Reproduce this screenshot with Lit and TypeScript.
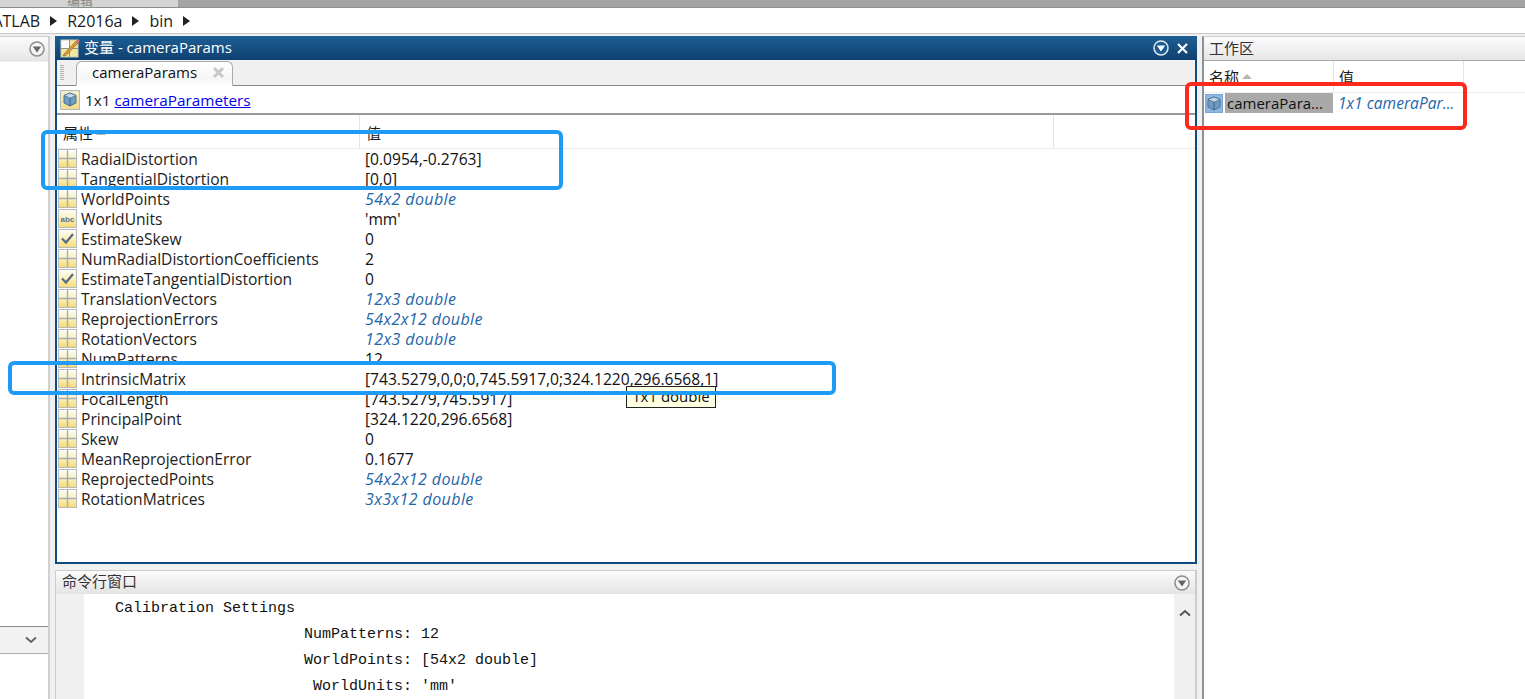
import { LitElement, html, css, svg } from "lit";
import { customElement } from "lit/decorators.js";

type Row = [string, "grid" | "abc" | "check", string, boolean?];
const ROWS: Row[] = [
  ["RadialDistortion", "grid", "[0.0954,-0.2763]"],
  ["TangentialDistortion", "grid", "[0,0]"],
  ["WorldPoints", "grid", "54x2 double", true],
  ["WorldUnits", "abc", "'mm'"],
  ["EstimateSkew", "check", "0"],
  ["NumRadialDistortionCoefficients", "grid", "2"],
  ["EstimateTangentialDistortion", "check", "0"],
  ["TranslationVectors", "grid", "12x3 double", true],
  ["ReprojectionErrors", "grid", "54x2x12 double", true],
  ["RotationVectors", "grid", "12x3 double", true],
  ["NumPatterns", "grid", "12"],
  ["IntrinsicMatrix", "grid", "[743.5279,0,0;0,745.5917,0;324.1220,296.6568,1]"],
  ["FocalLength", "grid", "[743.5279,745.5917]"],
  ["PrincipalPoint", "grid", "[324.1220,296.6568]"],
  ["Skew", "grid", "0"],
  ["MeanReprojectionError", "grid", "0.1677"],
  ["ReprojectedPoints", "grid", "54x2x12 double", true],
  ["RotationMatrices", "grid", "3x3x12 double", true],
];

const defs = svg`<defs>
  <linearGradient id="cell" x1="0" y1="0" x2="0" y2="1">
    <stop offset="0" stop-color="#fdfdf8"/><stop offset="0.5" stop-color="#fbf0c0"/><stop offset="1" stop-color="#f7da70"/>
  </linearGradient>
</defs>`;

const gridIcon = html`<svg class="ic" width="19" height="19" viewBox="0 0 19 19">
  <rect x="0.5" y="0.5" width="18" height="18" fill="url(#cell)" stroke="#b4babd"/>
  <path d="M9.5 1V18M1 9.5H18" stroke="#a3afb8" stroke-width="1.4"/>
  <path d="M1.5 1.5H8.5M10.5 1.5H17.5" stroke="#fff"/>
</svg>`;
const abcIcon = html`<svg class="ic" width="19" height="19" viewBox="0 0 19 19">
  <rect x="0.5" y="0.5" width="18" height="18" fill="url(#cell)" stroke="#b4babd"/>
  <text x="9.5" y="13" text-anchor="middle" class="abc">abc</text>
</svg>`;
const checkIcon = html`<svg class="ic" width="19" height="19" viewBox="0 0 19 19">
  <rect x="0.5" y="0.5" width="18" height="18" fill="url(#cell)" stroke="#b4babd"/>
  <path d="M4 9.5L8 13.5L15 5" fill="none" stroke="#566d80" stroke-width="2.2"/>
</svg>`;
const cube = html`<svg width="14" height="15" viewBox="0 0 14 15">
  <path d="M7 1L13 3.5V11L7 14L1 11V3.5Z" fill="#6f9cc4" stroke="#4c6f8f"/>
  <path d="M1 3.5L7 6.2L13 3.5L7 1Z" fill="#c3d9ea" stroke="#4c6f8f" stroke-width=".8"/>
  <path d="M7 6.2V14" stroke="#3f6385"/>
</svg>`;
const circleBtn = (light: boolean) => html`<svg width="16" height="16" viewBox="0 0 16 16">
  <circle cx="8" cy="8" r="7" fill="${light ? "#1d5a8f" : "#f4f4f4"}" stroke="${light ? "#dfe8f0" : "#8d8d8d"}" stroke-width="1.5"/>
  <path d="M3.8 5.6H12.2L8 11.4Z" fill="${light ? "#fff" : "#666"}"/>
</svg>`;
const tri = html`<svg width="7" height="10" viewBox="0 0 7 10"><path d="M0 0L7 5L0 10Z" fill="#222"/></svg>`;
const sortTri = html`<svg width="10" height="5" viewBox="0 0 10 5"><path d="M0 5L5 0L10 5Z" fill="#b9b8a8"/></svg>`;

@customElement("app-root")
export class AppRoot extends LitElement {
  static styles = css`
    :host {
      display: block;
      position: relative;
      width: 1525px;
      height: 699px;
      overflow: hidden;
      background: #fff;
      font-family: "Open Sans", "Noto Sans CJK SC", sans-serif;
      font-size: 15.6px;
      color: #1a1a1a;
    }
    .top { display: flex; height: 7px; border-bottom: 1px solid #8f8f8f; overflow: hidden; }
    .top .a { width: 178px; background: #d4d4d4; color: #888; font-size: 13px; line-height: 0; padding-left: 67px; box-sizing: border-box; }
    .top .b { flex: 1; background: #a4a4a4; }
    .addr {
      height: 25px; display: flex; align-items: center; gap: 10px; box-sizing: border-box;
      border-bottom: 1px solid #c8c8c8; margin-top: 1px; white-space: nowrap; overflow: hidden; font-size: 16px;
    }
    .addr .clip { margin-left: -22px; }
    .main { display: flex; height: 666px; background: #f0f0f0; padding-top: 2px; box-sizing: border-box; }
    .left { width: 50px; flex: none; background: #fff; border-right: 2px solid #d0d0d0; border-top: 1px solid #ccc; display: flex; flex-direction: column; box-sizing: border-box; }
    .left .h { height: 24px; display: flex; justify-content: flex-end; align-items: center; padding-right: 3px; background: linear-gradient(#fbfbfb, #e6e6e6); }
    .left .list { height: 566px; border-top: 1px solid #eee; border-bottom: 1px solid #8a8a8a; box-sizing: border-box; }
    .left .fold { height: 26px; background: #f2f2f2; border-bottom: 1px solid #aaa; display: flex; justify-content: flex-end; align-items: center; padding-right: 11px; }
    .center { width: 1142px; flex: none; margin-left: 5px; display: flex; flex-direction: column; }
    .var { height: 528px; flex: none; border: 2px solid #0f4a80; border-top: 0; border-radius: 3px 3px 0 0; background: #fff; display: flex; flex-direction: column; box-sizing: border-box; }
    .title { height: 24px; flex: none; margin: 0 -2px; padding: 0 9px 0 5px; display: flex; align-items: center; gap: 4px; color: #fff; font-size: 15px; background: linear-gradient(#1e5f95, #0f406f); box-sizing: border-box; }
    .title .t { padding-bottom: 3px; }
    .title .sp { flex: 1; }
    .title .x { margin-left: 4px; }
    .tabs { height: 26px; flex: none; background: #f0f0f0; border-bottom: 1px solid #888; display: flex; align-items: flex-end; padding-left: 3px; box-sizing: border-box; font-size: 15px; }
    .grip { width: 4px; height: 15px; margin-bottom: 5px; background: repeating-linear-gradient(#b5b5b5 0 1px, transparent 1px 2px); }
    .tab { width: 157px; height: 25px; margin-left: 12px; margin-bottom: -1px; box-sizing: border-box; background: linear-gradient(#fff, #f6f6f6 70%, #fff); border: 1px solid #aaa; border-bottom: 1px solid #fff; border-radius: 6px 6px 0 0; display: flex; align-items: center; justify-content: space-between; padding: 0 7px 3px 15px; color: #111; }
    .tool { height: 29px; flex: none; display: flex; align-items: center; gap: 5px; padding-left: 3px; border-bottom: 2px solid #999; box-sizing: border-box; font-size: 15.3px; }
    .tool a { color: #0000ee; text-decoration: underline; }
    .box { width: 20px; height: 20px; display: flex; align-items: center; justify-content: center; background: linear-gradient(#f5efcf, #f3dd8b); border: 1px solid #b5b8b8; box-sizing: border-box; }
    .thead { height: 34px; flex: none; display: grid; grid-template-columns: 303px 694px 1fr; border-bottom: 1px solid #eaeaea; box-sizing: border-box; }
    .thead > div { border-right: 1px solid #e4e4e4; padding: 2px 0 0 6px; display: flex; align-items: center; gap: 3px; align-self: stretch; font-size: 15px; }
    .thead > div:last-child { border-right: 0; }
    .row { height: 20px; display: grid; grid-template-columns: 303px 1fr; align-items: center; white-space: nowrap; line-height: 20px; }
    .name { display: flex; align-items: center; gap: 4px; color: #222; padding-left: 1px; }
    .ic { flex: none; margin-top: -1px; }
    .abc { font: 700 8px "Liberation Sans", sans-serif; fill: #58708a; }
    .val { padding-left: 5px; color: #111; }
    .val.link { color: #1f66a8; font-style: italic; font-size: 16px; letter-spacing: 0.4px; }
    .cmd { flex: 1; margin-top: 6px; border: 1px solid #ccc; border-bottom: 0; border-right-width: 2px; display: flex; flex-direction: column; min-height: 0; background: #fff; }
    .cmd .h { height: 23px; flex: none; display: flex; align-items: center; justify-content: space-between; padding: 0 5px 0 6px; font-size: 15px; color: #333; background: linear-gradient(#fbfbfb, #e4e4e4); box-sizing: border-box; }
    .cmd .h .t { padding-bottom: 4px; }
    .cmd .b { flex: 1; display: flex; min-height: 0; }
    .gutter { width: 28px; flex: none; background: #f0f0f0; }
    pre { flex: 1; margin: 0; padding: 2px 0 0 4px; font: 15px/26px "Liberation Mono", monospace; color: #111; overflow: hidden; }
    .sb { width: 21px; flex: none; background: #f0f0f0; text-align: center; padding-top: 6px; box-sizing: border-box; }
    .right { flex: 1; margin-left: 5px; border-left: 2px solid #8e8e96; border-top: 1px solid #ccc; background: #fff; display: flex; flex-direction: column; box-sizing: border-box; }
    .right .h { height: 24px; flex: none; display: flex; align-items: center; padding: 0 0 3px 5px; font-size: 15px; color: #333; background: linear-gradient(#fbfbfb, #e6e6e6); border-bottom: 1px solid #aaa; box-sizing: border-box; }
    .wh { height: 32px; flex: none; display: grid; grid-template-columns: 130px 130px; border-bottom: 1px solid #eee; box-sizing: border-box; }
    .wh > div { border-right: 1px solid #e4e4e4; padding-left: 5px; display: flex; align-items: center; gap: 3px; font-size: 15px; }
    .wr { height: 20px; display: flex; align-items: center; white-space: nowrap; }
    .wr .sel { width: 108px; height: 20px; margin-left: 2px; background: #a9a9a9; line-height: 20px; padding-left: 2px; box-sizing: border-box; color: #111; overflow: hidden; font-size: 15px; }
    .wr .ci { width: 18px; height: 19px; background: #8eb6e2; border: 1px solid #79a5d5; box-sizing: border-box; display: flex; align-items: center; justify-content: center; margin-left: 1px; }
    .wr .v { margin-left: 5px; color: #1f66a8; font-style: italic; }
    .tip { position: absolute; left: 626px; top: 386px; width: 90px; height: 22px; box-sizing: border-box; background: #ffffe1; border: 1px solid #222; font-size: 15px; line-height: 19px; padding-left: 5px; white-space: nowrap; color: #111; }
    .mark { position: absolute; box-sizing: border-box; border: 4px solid #1e9cf5; border-radius: 6px; pointer-events: none; }
    .m1 { left: 41px; top: 130px; width: 522px; height: 60px; }
    .m2 { left: 8px; top: 361px; width: 828px; height: 34px; }
    .m3 { left: 1185px; top: 82px; width: 282px; height: 48px; border-color: #fb2a1c; }
  `;

  render() {
    const iconOf = { grid: gridIcon, abc: abcIcon, check: checkIcon };
    return html`
      <svg width="0" height="0" style="position:absolute">${defs}</svg>
      <div class="top"><div class="a">编辑</div><div class="b"></div></div>
      <div class="addr">
        <span class="clip">MATLAB</span>${tri}<span>R2016a</span>${tri}<span>bin</span>${tri}
      </div>
      <div class="main">
        <div class="left">
          <div class="h">${circleBtn(false)}</div>
          <div class="list"></div>
          <div class="fold">
            <svg width="12" height="8" viewBox="0 0 12 8"><path d="M1 1.5L6 6L11 1.5" fill="none" stroke="#666" stroke-width="2"/></svg>
          </div>
        </div>
        <div class="center">
          <div class="var">
            <div class="title">
              <svg width="20" height="20" viewBox="0 0 20 20">
                <rect x="1" y="2" width="17" height="17" fill="#f6e79e" stroke="#c9c9b8"/>
                <path d="M1 10.5H18M9.5 2V19" stroke="#8a8f96"/>
                <rect x="1.5" y="2.5" width="7.5" height="7.5" fill="#fafafa"/>
                <path d="M4 16L16 3L18 5L6 17.5L3 18Z" fill="#d99a3a" stroke="#8a5a1d" stroke-width=".6"/>
                <path d="M16 3L18 1L20 3L18 5Z" fill="#d8647a"/>
              </svg>
              <span class="t">变量 - cameraParams</span>
              <span class="sp"></span>
              ${circleBtn(true)}
              <svg class="x" width="11" height="11" viewBox="0 0 11 11"><path d="M1 1L10 10M10 1L1 10" stroke="#fff" stroke-width="2.2"/></svg>
            </div>
            <div class="tabs">
              <div class="grip"></div>
              <div class="tab">
                <span>cameraParams</span>
                <svg width="13" height="13" viewBox="0 0 13 13"><path d="M2 2L11 11M11 2L2 11" stroke="#c4c8c8" stroke-width="3"/></svg>
              </div>
            </div>
            <div class="tool">
              <div class="box">${cube}</div>
              <span>1x1 <a>cameraParameters</a></span>
            </div>
            <div class="thead">
              <div>属性 ${sortTri}</div><div>值</div><div></div>
            </div>
            ${ROWS.map(([n, ic, v, link]) => html`
              <div class="row">
                <div class="name">${iconOf[ic]}<span>${n}</span></div>
                <div class="val ${link ? "link" : ""}">${v}</div>
              </div>`)}
          </div>
          <div class="cmd">
            <div class="h"><span class="t">命令行窗口</span>${circleBtn(false)}</div>
            <div class="b">
              <div class="gutter"></div>
              <pre>   Calibration Settings
                        NumPatterns: 12
                        WorldPoints: [54x2 double]
                         WorldUnits: 'mm'</pre>
              <div class="sb"><svg width="12" height="8" viewBox="0 0 12 8"><path d="M1 6.5L6 2L11 6.5" fill="none" stroke="#555" stroke-width="2"/></svg></div>
            </div>
          </div>
        </div>
        <div class="right">
          <div class="h">工作区</div>
          <div class="wh"><div>名称 ${sortTri}</div><div>值</div></div>
          <div class="wr">
            <div class="ci">${cube}</div>
            <div class="sel">cameraPara...</div>
            <div class="v">1x1 cameraPar...</div>
          </div>
        </div>
      </div>
      <div class="tip">1x1 double</div>
      <div class="mark m1"></div>
      <div class="mark m2"></div>
      <div class="mark m3"></div>
    `;
  }
}
